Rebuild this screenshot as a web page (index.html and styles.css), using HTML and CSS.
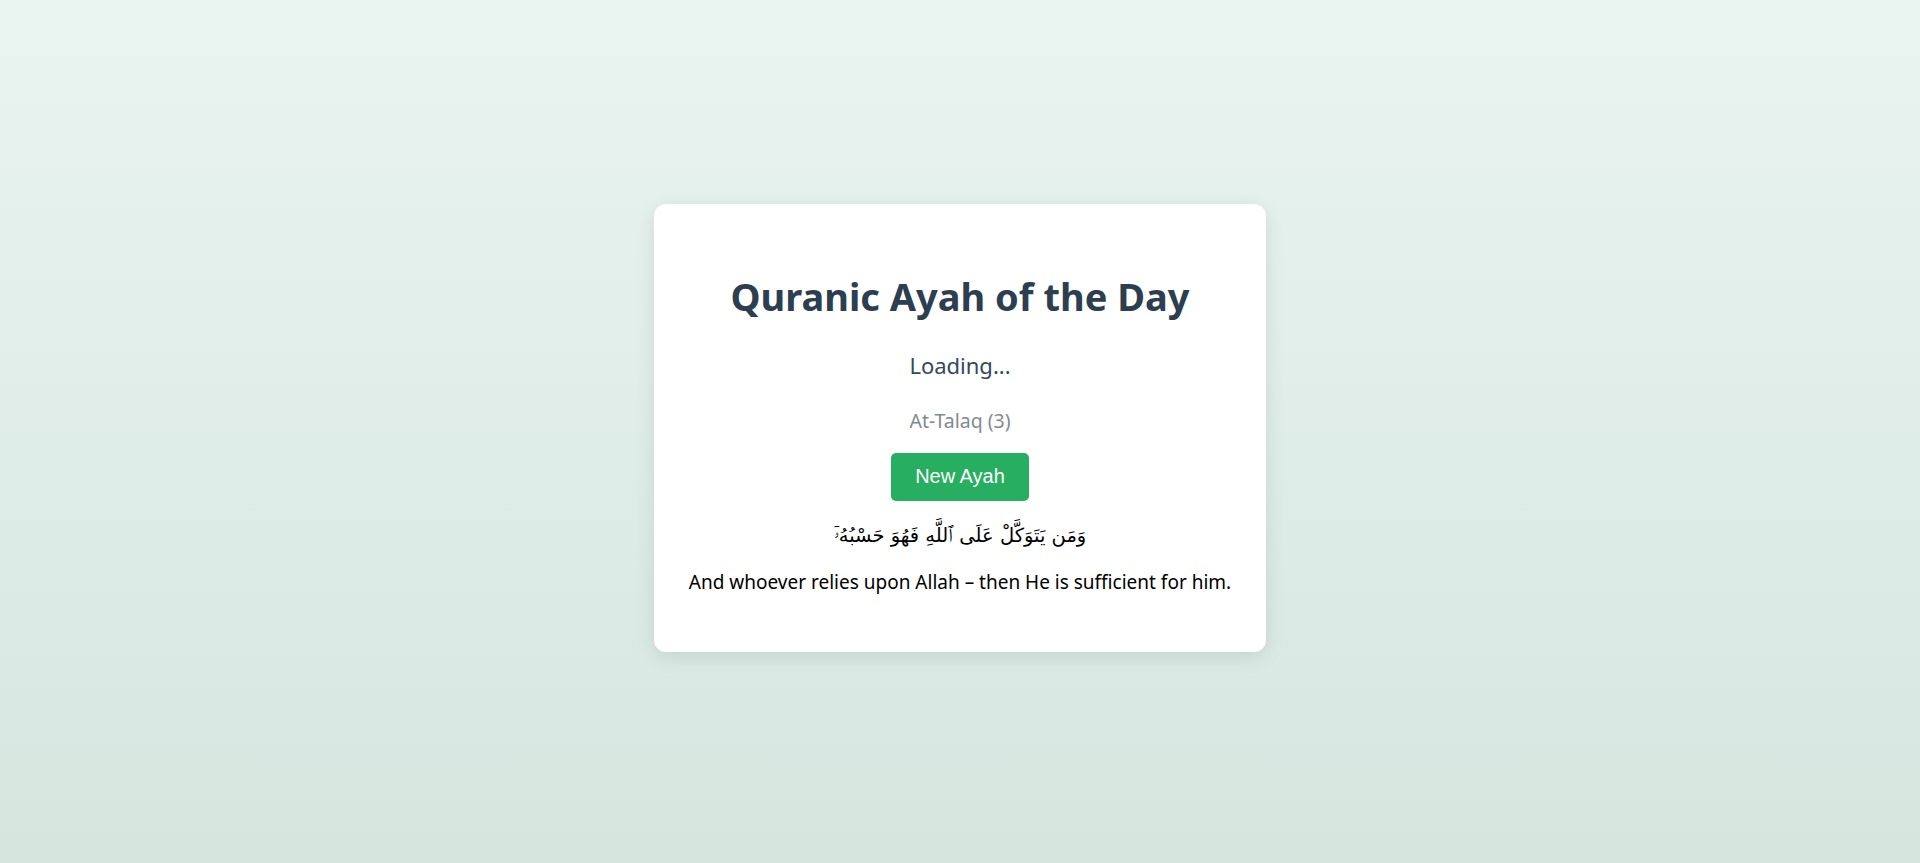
FILE: index.html
```html
<!DOCTYPE html>
<html lang="en">
<head>
<meta charset="utf-8">
<title>Quranic Ayah of the Day</title>
<link rel="stylesheet" href="styles.css">
</head>
<body>
  <main class="card">
    <h1 class="title">Quranic Ayah of the Day</h1>
    <p class="status">Loading...</p>
    <p class="ref">At-Talaq (3)</p>
    <button class="btn" type="button">New Ayah</button>
    <p class="arabic" dir="rtl" lang="ar">وَمَن يَتَوَكَّلْ عَلَى ٱللَّهِ فَهُوَ حَسْبُهُۥٓ</p>
    <p class="translation">And whoever relies upon Allah – then He is sufficient for him.</p>
  </main>
</body>
</html>
```

FILE: styles.css
```css
html, body {
  margin: 0;
  padding: 0;
}

body {
  box-sizing: border-box;
  min-height: 100vh;
  padding-bottom: 7px;
  display: flex;
  align-items: center;
  justify-content: center;
  background: linear-gradient(to bottom, #eaf4f1 0%, #d5e6df 100%);
  font-family: "Noto Sans", "Open Sans", sans-serif;
}

.card {
  width: 612px;
  box-sizing: border-box;
  padding: 40px 30px 56px;
  background: #ffffff;
  border-radius: 12px;
  box-shadow: 0 4px 20px rgba(0, 0, 0, 0.1);
  display: flex;
  flex-direction: column;
  align-items: center;
  text-align: center;
}

.title {
  margin: 27px 0 0;
  font-size: 38px;
  font-weight: 700;
  color: #2c3e50;
  line-height: 1.33;
}

.status {
  margin: 29px 0 0;
  font-size: 22px;
  color: #34495e;
  line-height: 1.35;
}

.ref {
  margin: 27px 0 0;
  font-size: 19.5px;
  color: #7f8c8d;
  line-height: 1.35;
}

.btn {
  margin-top: 19px;
  padding: 12px 24px 13px;
  border: none;
  border-radius: 5px;
  background: #27ae60;
  color: #ffffff;
  font-family: "Liberation Sans", Arial, sans-serif;
  font-size: 20px;
  line-height: 23px;
  cursor: pointer;
}

.arabic {
  margin: 20px 0 0;
  font-family: "DejaVu Sans", "Noto Sans", sans-serif;
  font-size: 19.5px;
  color: #000000;
  line-height: 1.5;
}

.translation {
  margin: 20px 0 0;
  font-size: 19px;
  color: #000000;
  line-height: 1.35;
}
```
